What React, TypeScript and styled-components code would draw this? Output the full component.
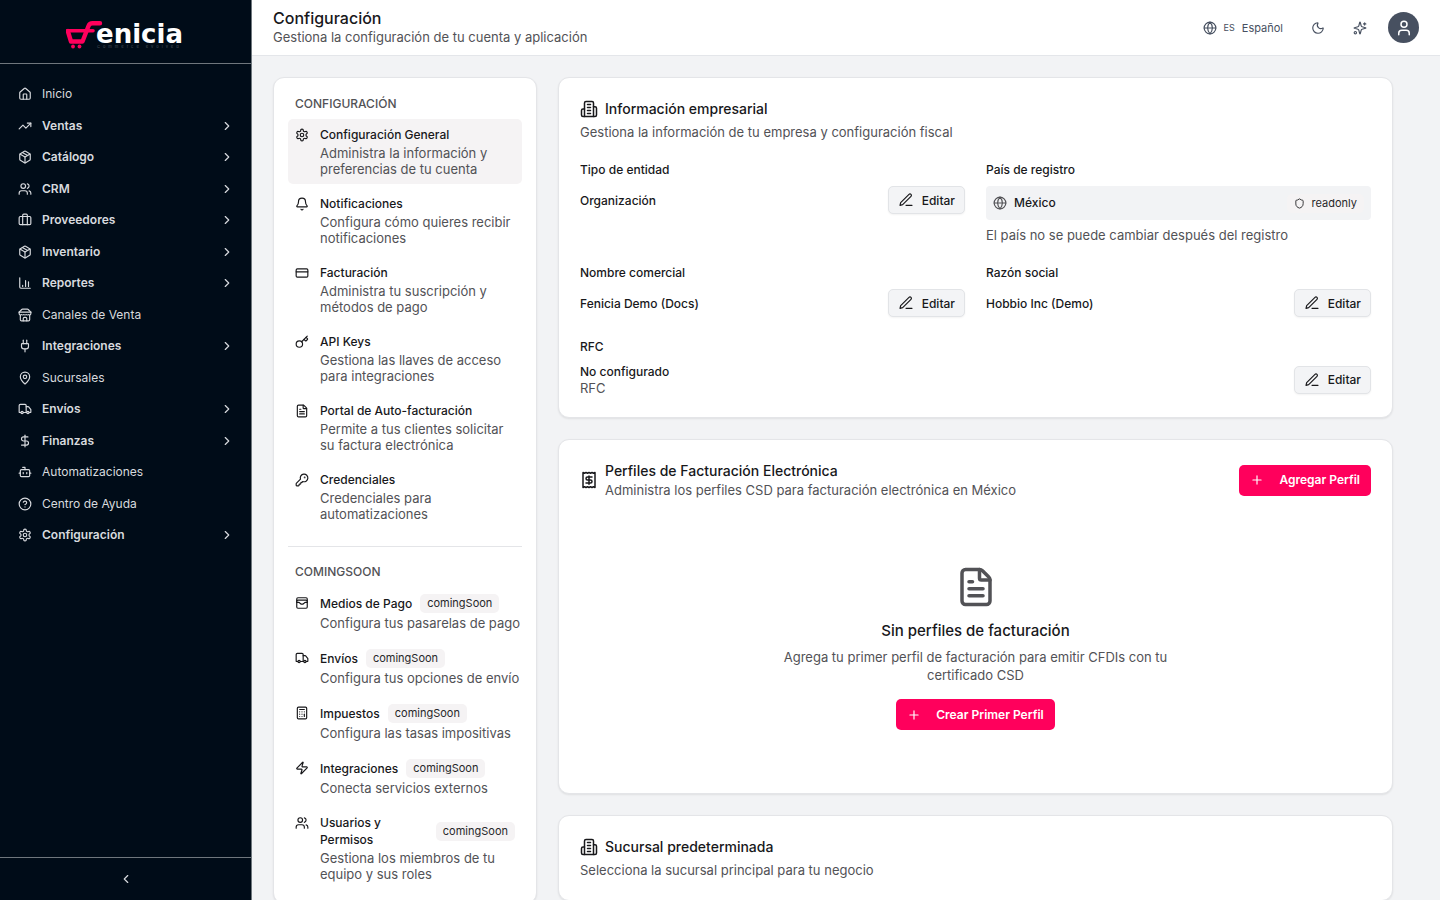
import React from "react";
import styled, { createGlobalStyle, css } from "styled-components";
import {
  House, TrendingUp, Package, Users, Plug, MapPin, Truck, DollarSign, Bot,
  CircleHelp, ChevronRight, ChevronLeft, Globe, Moon, User, Bell, CreditCard, Key,
  FileText, KeyRound, WalletCards, Calculator, Zap, Shield, Plus,
} from "lucide-react";

const Global = createGlobalStyle`
  *, *::before, *::after { box-sizing: border-box; }
  body {
    margin: 0;
    background: #f2f3f5;
    color: #18181b;
    font-family: Inter, "Liberation Sans", sans-serif;
    font-size: 12px;
    line-height: 18px;
  }
  #root { height: 100vh; overflow: hidden; }
  h1, h2, h3, p, ul { margin: 0; padding: 0; }
  ul { list-style: none; }
  a { color: inherit; text-decoration: none; }
  button { font: inherit; color: inherit; cursor: pointer; }
  svg { flex-shrink: 0; display: block; }
`;

const Shell = styled.div`
  display: grid;
  grid-template-columns: 252px minmax(0, 1fr);
  height: 100%;
`;

/* Sidebar */
const Sidebar = styled.aside`
  display: flex;
  flex-direction: column;
  min-height: 0;
  background: #000c18;
  color: #d7dade;
  border-right: 1px solid #6f777d;
`;
const Brand = styled.div`
  display: flex;
  justify-content: center;
  height: 64px;
  padding-top: 15px;
  border-bottom: 1px solid #6f777d;
`;
const Menu = styled.ul`
  display: flex;
  flex-direction: column;
  justify-content: space-between;
  height: 469px;
  margin: 16px 10px auto 11px;
`;
const MenuLink = styled.a<{ $group?: boolean }>`
  display: flex;
  align-items: center;
  gap: 10px;
  height: 28px;
  padding: 0 7px;
  font-weight: ${(p) => (p.$group ? 600 : 400)};
  span { flex: 1; }
`;
const CollapseBar = styled.div`
  border-top: 1px solid #6f777d;
  height: 43px;
`;
const Collapse = styled.button`
  display: flex;
  align-items: center;
  justify-content: center;
  width: 100%;
  height: 42px;
  padding: 0;
  border: 0;
  background: none;
`;

/* Top bar */
const Page = styled.div`
  display: flex;
  flex-direction: column;
  min-width: 0;
  min-height: 0;
`;
const TopBar = styled.header`
  display: flex;
  align-items: center;
  justify-content: space-between;
  flex-shrink: 0;
  height: 56px;
  padding: 0 21px;
  background: #fff;
  border-bottom: 1px solid #e4e6ea;
`;
const Heading = styled.div`
  padding-bottom: 2px;
`;
const PageTitle = styled.h1`
  font-size: 16px;
  line-height: 20px;
  font-weight: 500;
`;
const Muted = styled.p<{ $tight?: boolean }>`
  color: #525256;
  font-size: 13px;
  font-weight: 400;
  line-height: ${(p) => (p.$tight ? 16 : 18)}px;
`;
const Tools = styled.div`
  display: flex;
  align-items: center;
  gap: 14px;
  color: #475060;
`;
const ToolButton = styled.button`
  display: flex;
  align-items: center;
  justify-content: center;
  gap: 7px;
  min-width: 28px;
  height: 28px;
  padding: 0 7px;
  border: 0;
  background: none;
  font-size: 11px;
`;
const Code = styled.span`
  font-size: 9px;
`;
const Avatar = styled.button`
  display: grid;
  place-items: center;
  width: 31px;
  height: 31px;
  padding: 0;
  border: 0;
  border-radius: 50%;
  background: #475060;
  color: #fff;
`;

/* Content */
const Content = styled.main`
  flex: 1;
  min-height: 0;
  overflow: hidden;
  padding: 21px;
`;
const Columns = styled.div`
  display: grid;
  grid-template-columns: 264px minmax(0, 1fr);
  align-items: start;
  gap: 21px;
  max-width: 1120px;
`;
const Stack = styled.div`
  display: flex;
  flex-direction: column;
  gap: 21px;
`;
const card = css`
  background: #fff;
  border: 1px solid #e4e5e8;
  border-radius: 11px;
  box-shadow: 0 1px 2px rgba(0, 0, 0, 0.08);
`;
const SettingsNav = styled.nav`
  ${card}
  padding: 17px 14px 14px;
`;
const NavGroup = styled.section`
  & + & {
    margin-top: 17px;
    padding-top: 16px;
    border-top: 1px solid #e4e5e8;
  }
`;
const NavHeading = styled.h2`
  padding: 0 7px;
  margin-bottom: 6px;
  color: #525256;
  font-size: 12px;
  line-height: 18px;
  font-weight: 500;
`;
const NavList = styled.ul`
  display: flex;
  flex-direction: column;
  gap: 4px;
`;
const NavItem = styled.a<{ $active?: boolean }>`
  display: flex;
  gap: 11px;
  padding: 7px;
  border-radius: 5px;
  background: ${(p) => (p.$active ? "#f5f3f4" : "transparent")};
  > svg { margin-top: 2px; }
`;
const NavText = styled.span`
  flex: 1;
  min-width: 0;
`;
const NavLabel = styled.span`
  display: flex;
  align-items: center;
  gap: 8px;
  font-weight: 500;
  line-height: 17px;
`;
const NavHint = styled.span`
  display: block;
  margin: 2px -7px 0 0;
  color: #525256;
  font-size: 13px;
  line-height: 16px;
`;
const Badge = styled.span`
  display: inline-flex;
  align-items: center;
  flex-shrink: 0;
  gap: 7px;
  padding: 0 7px;
  border-radius: 5px;
  background: #f5f3f4;
  color: #27272a;
  font-size: 11px;
  font-weight: 400;
  line-height: 19px;
`;

const Card = styled.section`
  ${card}
  padding: 21px;
`;
const CardHead = styled.div`
  display: flex;
  align-items: center;
  justify-content: space-between;
`;
const CardTitleRow = styled.div`
  display: flex;
  align-items: center;
  gap: 7px;
`;
const CardTitle = styled.h2`
  font-size: 14px;
  line-height: 20px;
  font-weight: 500;
`;
const CardIntro = styled(Muted)`
  margin-top: 4px;
`;
const Fields = styled.div`
  display: grid;
  grid-template-columns: repeat(2, minmax(0, 1fr));
  gap: 21px;
  margin-top: 20px;
  font-weight: 500;
`;
const Field = styled.div<{ $wide?: boolean }>`
  grid-column: ${(p) => (p.$wide ? "1 / -1" : "auto")};
  display: flex;
  flex-direction: column;
  gap: 7px;
`;
const ValueRow = styled.div`
  display: flex;
  align-items: center;
  justify-content: space-between;
  line-height: 17px;
`;
const Locked = styled.div`
  display: flex;
  align-items: center;
  gap: 7px;
  height: 34px;
  padding: 0 7px;
  border-radius: 4px;
  background: #f2f3f5;
  > svg { color: #525256; }
  > span:first-of-type { flex: 1; }
`;
const Edit = styled.button`
  display: flex;
  align-items: center;
  gap: 8px;
  height: 28px;
  padding: 0 9px;
  border: 1px solid #e2e4e7;
  border-radius: 5px;
  background: #f3f4f6;
  box-shadow: 0 1px 2px rgba(0, 0, 0, 0.05);
`;
const Primary = styled.button`
  display: flex;
  align-items: center;
  gap: 15px;
  height: 31px;
  padding: 0 11px;
  border: 0;
  border-radius: 5px;
  background: #ff005c;
  color: #fff;
  font-weight: 600;
`;
const Empty = styled.div`
  display: flex;
  flex-direction: column;
  align-items: center;
  padding: 67px 0 42px;
  text-align: center;
  > svg { color: #525256; }
`;
const EmptyTitle = styled.h3`
  margin: 12px 0 6px;
  font-size: 15px;
  line-height: 22px;
  font-weight: 500;
`;
const EmptyText = styled(Muted)`
  max-width: 392px;
  margin-bottom: 15px;
`;

type IconProps = { size?: number; weight?: number; children?: React.ReactNode };
const Glyph = ({ size = 14, weight = 2, children }: IconProps) => (
  <svg width={size} height={size} viewBox="0 0 24 24" fill="none" stroke="currentColor" strokeWidth={weight} strokeLinecap="round" strokeLinejoin="round" aria-hidden="true">
    {children}
  </svg>
);
const Building = ({ size = 18 }: IconProps) => (
  <Glyph size={size}>
    <path d="M6 22V4a2 2 0 0 1 2-2h8a2 2 0 0 1 2 2v18Z" />
    <path d="M6 12H4a2 2 0 0 0-2 2v6a2 2 0 0 0 2 2h2" />
    <path d="M18 9h2a2 2 0 0 1 2 2v9a2 2 0 0 1-2 2h-2" />
    <path d="M10 6h4M10 10h4M10 14h4M10 18h4" />
  </Glyph>
);
const ReceiptIcon = () => (
  <Glyph size={18}>
    <path d="M4 2v20l2-1 2 1 2-1 2 1 2-1 2 1 2-1 2 1V2l-2 1-2-1-2 1-2-1-2 1-2-1-2 1Z" />
    <path d="M16 8h-6a2 2 0 1 0 0 4h4a2 2 0 1 1 0 4H8" />
    <path d="M12 17.5v-11" />
  </Glyph>
);
const BarsIcon = ({ size }: IconProps) => (
  <Glyph size={size}>
    <path d="M3 3v16a2 2 0 0 0 2 2h16M8 18v-2M13 18V8M18 18V10" />
  </Glyph>
);
const StoreIcon = ({ size }: IconProps) => (
  <Glyph size={size}>
    <path d="m2 7 4.41-4.41A2 2 0 0 1 7.83 2h8.34a2 2 0 0 1 1.42.59L22 7" />
    <path d="M4 12v8a2 2 0 0 0 2 2h12a2 2 0 0 0 2-2v-8" />
    <path d="M15 22v-4a2 2 0 0 0-2-2h-2a2 2 0 0 0-2 2v4" />
    <path d="M2 7h20" />
    <path d="M22 7v3a2 2 0 0 1-2 2a2.7 2.7 0 0 1-1.59-.63.7.7 0 0 0-.82 0A2.7 2.7 0 0 1 16 12a2.7 2.7 0 0 1-1.59-.63.7.7 0 0 0-.82 0A2.7 2.7 0 0 1 12 12a2.7 2.7 0 0 1-1.59-.63.7.7 0 0 0-.82 0A2.7 2.7 0 0 1 8 12a2.7 2.7 0 0 1-1.59-.63.7.7 0 0 0-.82 0A2.7 2.7 0 0 1 4 12a2 2 0 0 1-2-2V7" />
  </Glyph>
);
const CaseIcon = ({ size }: IconProps) => (
  <Glyph size={size}>
    <rect x="2" y="6" width="20" height="14" rx="2" />
    <path d="M16 20V4a2 2 0 0 0-2-2h-4a2 2 0 0 0-2 2v16" />
  </Glyph>
);
const SettingsGear = ({ size }: IconProps) => (
  <Glyph size={size}>
    <path d="M12.22 2h-.44a2 2 0 0 0-2 2v.18a2 2 0 0 1-1 1.73l-.43.25a2 2 0 0 1-2 0l-.15-.08a2 2 0 0 0-2.73.73l-.22.38a2 2 0 0 0 .73 2.73l.15.1a2 2 0 0 1 1 1.72v.51a2 2 0 0 1-1 1.74l-.15.09a2 2 0 0 0-.73 2.73l.22.38a2 2 0 0 0 2.73.73l.15-.08a2 2 0 0 1 2 0l.43.25a2 2 0 0 1 1 1.73V20a2 2 0 0 0 2 2h.44a2 2 0 0 0 2-2v-.18a2 2 0 0 1 1-1.73l.43-.25a2 2 0 0 1 2 0l.15.08a2 2 0 0 0 2.73-.73l.22-.39a2 2 0 0 0-.73-2.73l-.15-.08a2 2 0 0 1-1-1.74v-.5a2 2 0 0 1 1-1.74l.15-.09a2 2 0 0 0 .73-2.73l-.22-.38a2 2 0 0 0-2.73-.73l-.15.08a2 2 0 0 1-2 0l-.43-.25a2 2 0 0 1-1-1.73V4a2 2 0 0 0-2-2z" />
    <circle cx="12" cy="12" r="3" />
  </Glyph>
);
const SparkIcon = ({ size }: IconProps) => (
  <Glyph size={size}>
    <path d="M9.937 15.5A2 2 0 0 0 8.5 14.063l-6.135-1.582a.5.5 0 0 1 0-.962L8.5 9.936A2 2 0 0 0 9.937 8.5l1.582-6.135a.5.5 0 0 1 .963 0L14.063 8.5A2 2 0 0 0 15.5 9.937l6.135 1.581a.5.5 0 0 1 0 .964L15.5 14.063a2 2 0 0 0-1.437 1.437l-1.582 6.135a.5.5 0 0 1-.963 0z" />
    <path d="M20 3v4M22 5h-4" />
    <circle cx="4" cy="20" r="2" />
  </Glyph>
);
const PenIcon = () => (
  <Glyph size={16} weight={1.75}>
    <path d="M12 20h9" />
    <path d="M16.5 3.5a2.121 2.121 0 0 1 3 3L7 19l-4 1 1-4Z" />
  </Glyph>
);
const Logo = () => (
  <svg width="120" height="36" viewBox="0 0 120 36" role="img" aria-label="Fenicia">
    <g fill="none" stroke="#ff005c" strokeLinejoin="round" strokeLinecap="round">
      <path d="M1.5 15.8H27" strokeWidth="3.6" />
      <path d="M1.8 16L5 26.5H16.5L22.5 11Q23.6 8.2 26.5 8.2H34" strokeWidth="4.4" />
    </g>
    <circle cx="7" cy="31.5" r="1.9" fill="#ff005c" />
    <circle cx="13.5" cy="31.5" r="1.9" fill="#ff005c" />
    <text x="30" y="28" fill="#fff" fontFamily="'DejaVu Sans', sans-serif" fontWeight="700" fontSize="26">enicia</text>
    <text x="31" y="33" fill="#4a535b" fontFamily="Inter, sans-serif" fontSize="4" letterSpacing="3">Commerce evolved</text>
  </svg>
);

const menu = [
  { label: "Inicio", icon: House },
  { label: "Ventas", icon: TrendingUp, group: true },
  { label: "Catálogo", icon: Package, group: true },
  { label: "CRM", icon: Users, group: true },
  { label: "Proveedores", icon: CaseIcon, group: true },
  { label: "Inventario", icon: Package, group: true },
  { label: "Reportes", icon: BarsIcon, group: true },
  { label: "Canales de Venta", icon: StoreIcon },
  { label: "Integraciones", icon: Plug, group: true },
  { label: "Sucursales", icon: MapPin },
  { label: "Envíos", icon: Truck, group: true },
  { label: "Finanzas", icon: DollarSign, group: true },
  { label: "Automatizaciones", icon: Bot },
  { label: "Centro de Ayuda", icon: CircleHelp },
  { label: "Configuración", icon: SettingsGear, group: true },
];

const general = [
  { label: "Configuración General", hint: "Administra la información y preferencias de tu cuenta", icon: SettingsGear, active: true },
  { label: "Notificaciones", hint: "Configura cómo quieres recibir notificaciones", icon: Bell },
  { label: "Facturación", hint: "Administra tu suscripción y métodos de pago", icon: CreditCard },
  { label: "API Keys", hint: "Gestiona las llaves de acceso para integraciones", icon: Key },
  { label: "Portal de Auto-facturación", hint: "Permite a tus clientes solicitar su\u00a0factura electrónica", icon: FileText },
  { label: "Credenciales", hint: "Credenciales para automatizaciones", icon: KeyRound },
];

const soon = [
  { label: "Medios de Pago", hint: "Configura tus pasarelas de pago", icon: WalletCards },
  { label: "Envíos", hint: "Configura tus opciones de envío", icon: Truck },
  { label: "Impuestos", hint: "Configura las tasas impositivas", icon: Calculator },
  { label: "Integraciones", hint: "Conecta servicios externos", icon: Zap },
  { label: "Usuarios y Permisos", hint: "Gestiona los miembros de tu equipo y sus roles", icon: Users },
];

const EditButton = () => (
  <Edit type="button"><PenIcon />Editar</Edit>
);

export default function App() {
  return (
    <>
      <Global />
      <Shell>
        <Sidebar>
          <Brand><Logo /></Brand>
          <Menu>
            {menu.map(({ label, icon: Icon, group }) => (
              <li key={label}>
                <MenuLink href="#" $group={group}>
                  <Icon size={14} />
                  <span>{label}</span>
                  {group && <ChevronRight size={14} />}
                </MenuLink>
              </li>
            ))}
          </Menu>
          <CollapseBar>
            <Collapse type="button" aria-label="Contraer menú"><ChevronLeft size={14} /></Collapse>
          </CollapseBar>
        </Sidebar>
        <Page>
          <TopBar>
            <Heading>
              <PageTitle>Configuración</PageTitle>
              <Muted>Gestiona la configuración de tu cuenta y aplicación</Muted>
            </Heading>
            <Tools>
              <ToolButton type="button"><Globe size={14} /><Code>ES</Code>Español</ToolButton>
              <ToolButton type="button" aria-label="Tema"><Moon size={14} /></ToolButton>
              <ToolButton type="button" aria-label="Asistente"><SparkIcon size={14} /></ToolButton>
              <Avatar type="button" aria-label="Cuenta"><User size={18} /></Avatar>
            </Tools>
          </TopBar>
          <Content>
            <Columns>
              <SettingsNav aria-label="Configuración">
                <NavGroup>
                  <NavHeading>CONFIGURACIÓN</NavHeading>
                  <NavList>
                    {general.map(({ label, hint, icon: Icon, active }) => (
                      <li key={label}>
                        <NavItem href="#" $active={active}>
                          <Icon size={14} />
                          <NavText>
                            <NavLabel>{label}</NavLabel>
                            <NavHint>{hint}</NavHint>
                          </NavText>
                        </NavItem>
                      </li>
                    ))}
                  </NavList>
                </NavGroup>
                <NavGroup>
                  <NavHeading>COMINGSOON</NavHeading>
                  <NavList>
                    {soon.map(({ label, hint, icon: Icon }) => (
                      <li key={label}>
                        <NavItem href="#">
                          <Icon size={14} />
                          <NavText>
                            <NavLabel>{label}<Badge>comingSoon</Badge></NavLabel>
                            <NavHint>{hint}</NavHint>
                          </NavText>
                        </NavItem>
                      </li>
                    ))}
                  </NavList>
                </NavGroup>
              </SettingsNav>
              <Stack>
                <Card>
                  <CardTitleRow><Building /><CardTitle>Información empresarial</CardTitle></CardTitleRow>
                  <CardIntro>Gestiona la información de tu empresa y configuración fiscal</CardIntro>
                  <Fields>
                    <Field>
                      <span>Tipo de entidad</span>
                      <ValueRow><span>Organización</span><EditButton /></ValueRow>
                    </Field>
                    <Field>
                      <span>País de registro</span>
                      <Locked>
                        <Globe size={14} /><span>México</span>
                        <Badge><Shield size={11} />readonly</Badge>
                      </Locked>
                      <Muted $tight>El país no se puede cambiar después del registro</Muted>
                    </Field>
                    <Field>
                      <span>Nombre comercial</span>
                      <ValueRow><span>Fenicia Demo (Docs)</span><EditButton /></ValueRow>
                    </Field>
                    <Field>
                      <span>Razón social</span>
                      <ValueRow><span>Hobbio Inc (Demo)</span><EditButton /></ValueRow>
                    </Field>
                    <Field $wide>
                      <span>RFC</span>
                      <ValueRow>
                        <div>No configurado<Muted $tight>RFC</Muted></div>
                        <EditButton />
                      </ValueRow>
                    </Field>
                  </Fields>
                </Card>
                <Card>
                  <CardHead>
                    <CardTitleRow>
                      <ReceiptIcon />
                      <div>
                        <CardTitle>Perfiles de Facturación Electrónica</CardTitle>
                        <Muted>Administra los perfiles CSD para facturación electrónica en México</Muted>
                      </div>
                    </CardTitleRow>
                    <Primary type="button"><Plus size={14} />Agregar Perfil</Primary>
                  </CardHead>
                  <Empty>
                    <FileText size={42} />
                    <EmptyTitle>Sin perfiles de facturación</EmptyTitle>
                    <EmptyText>Agrega tu primer perfil de facturación para emitir CFDIs con tu certificado CSD</EmptyText>
                    <Primary type="button"><Plus size={14} />Crear Primer Perfil</Primary>
                  </Empty>
                </Card>
                <Card>
                  <CardTitleRow><Building /><CardTitle>Sucursal predeterminada</CardTitle></CardTitleRow>
                  <CardIntro>Selecciona la sucursal principal para tu negocio</CardIntro>
                </Card>
              </Stack>
            </Columns>
          </Content>
        </Page>
      </Shell>
    </>
  );
}
